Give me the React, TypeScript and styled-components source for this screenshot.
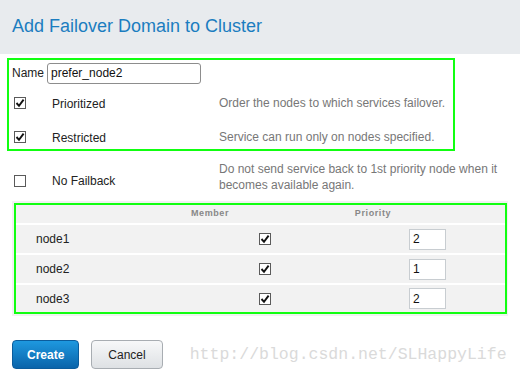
import React from "react";
import styled, {createGlobalStyle} from "styled-components";

const GlobalStyle = createGlobalStyle`
  html, body {
    margin: 0;
    padding: 0;
    background: #ffffff;
  }
  body {
    font-family: "Liberation Sans", Arial, sans-serif;
    color: #222;
  }
`;

const Page = styled.div`
  width: 520px;
  height: 375px;
  overflow: hidden;
  background: #fff;
`;

const Header = styled.header`
  height: 54px;
  background: #e8ebee;
  display: flex;
  align-items: center;
  padding-left: 12px;
  h1 {
    margin: 0;
    font-weight: normal;
    font-size: 18px;
    color: #1b7dc0;
    padding-bottom: 2px;
  }
`;

const Body = styled.div`
  padding: 4px 0 0 9px;
`;

const Marked = styled.div`
  border: 2px solid #11ff11;
  box-sizing: border-box;
  margin-left: -2px;
  width: 448px;
  padding: 2px 0 0 0;
  height: 93px;
`;

const NameRow = styled.div`
  display: flex;
  align-items: center;
  gap: 3px;
  height: 22px;
  padding-left: 3px;
  font-size: 12px;
`;

const TextInput = styled.div<{ $w: number }>`
  width: ${p => p.$w}px;
  height: 21px;
  box-sizing: border-box;
  border: 1px solid ${p => (p.$w > 100 ? "#8d8d8d" : "#c8cdd1")};
  border-radius: ${p => (p.$w > 100 ? 3 : 0)}px;
  background: #fff;
  font-size: 12px;
  padding-left: 3px;
  display: flex;
  align-items: center;
  color: #111;
`;

const OptionRow = styled.div<{ $top: number }>`
  display: grid;
  grid-template-columns: 43px 167px 1fr;
  align-items: center;
  margin-top: ${p => p.$top}px;
  min-height: 22px;
`;

const Left = styled.div<{ $drop?: number }>`
  padding-top: ${p => p.$drop || 0}px;
  padding-left: 5px;
  display: flex;
  align-items: center;
`;

const Label = styled.div<{ $drop?: number }>`
  font-size: 12px;
  color: #222;
  padding-top: ${p => (p.$drop || 0) + 2}px;
`;

const Desc = styled.div`
  font-size: 12px;
  color: #777;
  line-height: 16px;
  width: 298px;
`;

const Box = styled.span`
  width: 12px;
  height: 12px;
  box-sizing: border-box;
  border: 1px solid #5a5a5a;
  background: #fff;
  display: inline-flex;
  align-items: center;
  justify-content: center;
  svg {
    display: block;
  }
`;

const Check = ({on}: { on: boolean }) => (
  <Box>
    {on && (
      <svg width="10" height="10" viewBox="0 0 10 10">
        <path d="M1.5 5 L4 7.8 L8.6 1.6" fill="none" stroke="#111" strokeWidth="1.9"/>
      </svg>
    )}
  </Box>
);

const TableWrap = styled.div`
  margin: 8px 0 0 3px;
  width: 496px;
  background: #f2f2f2;
  padding: 2px 1px 2px 2px;
  box-sizing: border-box;
`;

const TableMark = styled.div`
  border: 2px solid #11ff11;
`;

const Row = styled.div<{ $h: number; $head?: boolean }>`
  display: grid;
  grid-template-columns: 114px 160px 166px 1fr;
  align-items: center;
  height: ${p => p.$h}px;
  border-top: ${p => (p.$head ? "none" : "2px solid #fff")};
`;

const HeadCell = styled.div`
  text-align: center;
  font-size: 9px;
  font-weight: bold;
  color: #888;
  letter-spacing: 0.6px;
  padding-bottom: 2px;
`;

const NodeName = styled.div`
  padding-left: 20px;
  font-size: 12px;
  color: #222;
`;

const EndCell = styled.div<{ $right: number }>`
  justify-self: end;
  margin-right: ${p => p.$right}px;
  display: flex;
`;

const Footer = styled.div`
  display: flex;
  align-items: center;
  gap: 12px;
  margin-top: 24px;
  padding-left: 3px;
`;

const Button = styled.div<{ $primary?: boolean }>`
  height: 29px;
  box-sizing: border-box;
  padding: 0 ${p => (p.$primary ? 14 : 16)}px;
  border-radius: 4px;
  display: flex;
  align-items: center;
  font-size: 12px;
  border: 1px solid ${p => (p.$primary ? "#0b5c9c" : "#a8adb2")};
  color: ${p => (p.$primary ? "#fff" : "#222")};
  font-weight: ${p => (p.$primary ? "bold" : "normal")};
  background: ${p =>
    p.$primary
      ? "linear-gradient(#1e98df, #0a64aa)"
      : "linear-gradient(#f7f8f9, #dee1e4)"};
`;

const Watermark = styled.div`
  margin-left: 15px;
  font-family: "Liberation Mono", "Courier New", monospace;
  font-size: 16.5px;
  color: #dadada;
`;

const nodes = [
  {name: "node1", priority: "2"},
  {name: "node2", priority: "1"},
  {name: "node3", priority: "2"},
];

export default function App() {
  return (
    <Page>
      <GlobalStyle/>
      <Header>
        <h1>Add Failover Domain to Cluster</h1>
      </Header>
      <Body>
        <Marked>
          <NameRow>
            <span>Name</span>
            <TextInput $w={154}>prefer_node2</TextInput>
          </NameRow>
          <OptionRow $top={8}>
            <Left><Check on/></Left>
            <Label>Prioritized</Label>
            <Desc>Order the nodes to which services failover.</Desc>
          </OptionRow>
          <OptionRow $top={12}>
            <Left><Check on/></Left>
            <Label>Restricted</Label>
            <Desc>Service can run only on nodes specified.</Desc>
          </OptionRow>
        </Marked>
        <OptionRow $top={10}>
          <Left $drop={8}><Check on={false}/></Left>
          <Label $drop={6}>No Failback</Label>
          <Desc>Do not send service back to 1st priority node when it becomes available again.</Desc>
        </OptionRow>
        <TableWrap>
          <TableMark>
            <Row $h={18} $head>
              <div/>
              <HeadCell>Member</HeadCell>
              <HeadCell>Priority</HeadCell>
              <div/>
            </Row>
            {nodes.map((n, i) => (
              <Row key={n.name} $h={i === 2 ? 27 : 28}>
                <NodeName>{n.name}</NodeName>
                <EndCell $right={19}><Check on/></EndCell>
                <EndCell $right={10}><TextInput $w={37}>{n.priority}</TextInput></EndCell>
                <div/>
              </Row>
            ))}
          </TableMark>
        </TableWrap>
        <Footer>
          <Button $primary>Create</Button>
          <Button>Cancel</Button>
          <Watermark>http://blog.csdn.net/SLHappyLife</Watermark>
        </Footer>
      </Body>
    </Page>
  );
}
